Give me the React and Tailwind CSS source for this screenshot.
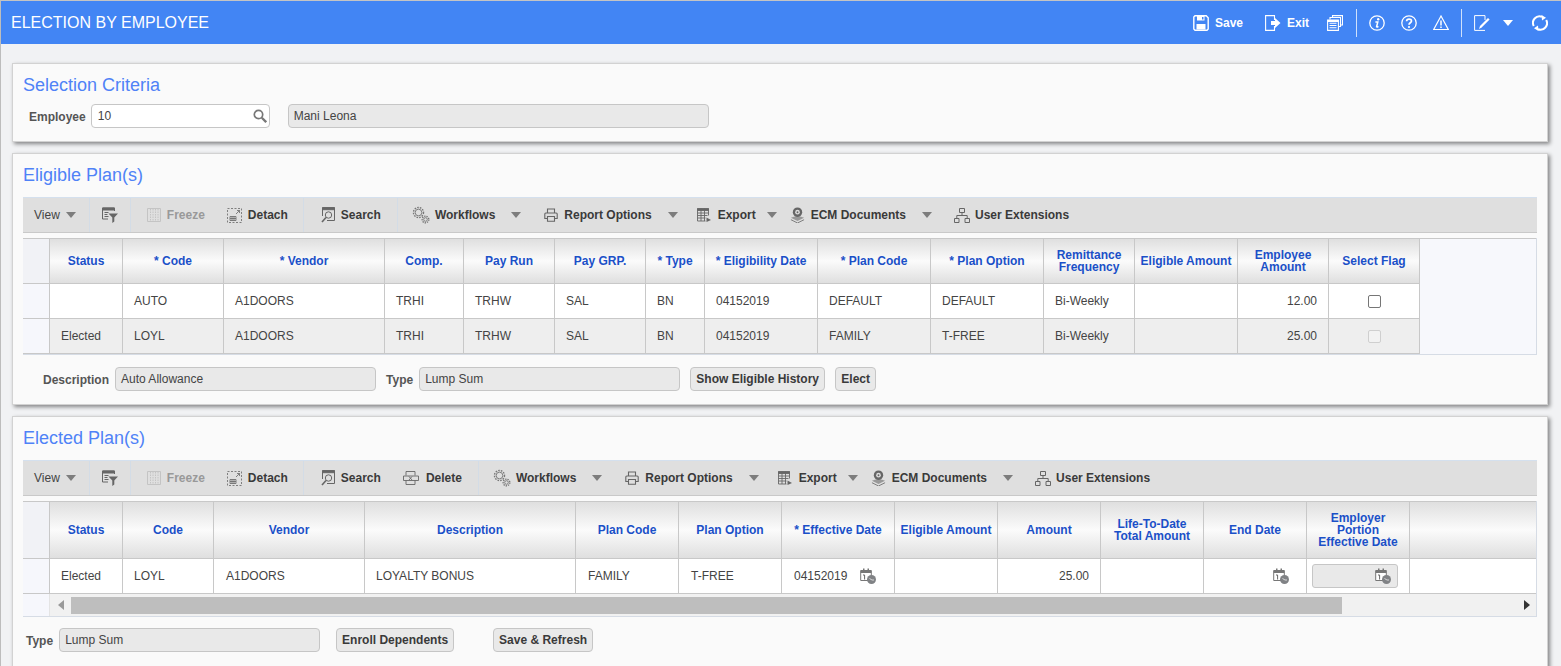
const Caret = ({ className = 'ml-[16px]' }) => (
  <svg viewBox="0 0 10 6" className={`w-[10px] h-[6px] shrink-0 fill-[#7d7d7d] ${className}`}><path d="M0 0h10L5 6z" /></svg>
);

const IconSave = () => (
  <svg viewBox="0 0 16 16" className="w-4 h-4 fill-none stroke-white stroke-[1.4]">
    <path d="M.8 2 2 .8h11.200l2 2v11.200l-1.200 1.200H2L.8 14z" />
    <path d="M4 1h7.500v4.500H4z" fill="#fff" stroke="none" />
    <path d="M3.500 9h9v5.500h-9z" fill="#fff" stroke="none" />
    <path d="M9 2h1.500v2.500H9z" fill="#4285f4" stroke="none" />
  </svg>
);
const IconExit = () => (
  <svg viewBox="0 0 16 16" className="w-4 h-4 fill-none stroke-white stroke-[1.1]">
    <path d="M9.500 5V.6H.6v14.800h8.900V11" />
    <path d="M6 6h4V3l5.500 5-5.500 5v-3H6z" fill="#fff" stroke="none" />
  </svg>
);
const IconStack = () => (
  <svg viewBox="0 0 16 16" className="w-4 h-4 fill-none stroke-white stroke-[1.1]">
    <path d="M5.500 2.500V.6h10v9.400H13.500" />
    <path d="M3 4.500v-2h10.500v9H11.500" />
    <path d="M.6 5h10.800v10.400H.6z" />
    <path d="M2.500 8.300h7M2.500 10.500h7M2.500 12.800h7" />
    <path d="M.6 5h10.800v2H.6z" fill="#fff" stroke="none" />
  </svg>
);
const IconInfo = () => (
  <svg viewBox="0 0 16 16" className="w-4 h-4 fill-none stroke-white stroke-[1.3]">
    <circle cx="8" cy="8" r="7.200" />
    <circle cx="9.200" cy="4.200" r="1.200" fill="#fff" stroke="none" />
    <path d="M6.400 7h2.400L7.600 11.600c-.1.600.4.800 1.800-.3" strokeWidth="1.500" />
  </svg>
);
const IconHelp = () => (
  <svg viewBox="0 0 16 16" className="w-4 h-4 fill-none stroke-white stroke-[1.3]">
    <circle cx="8" cy="8" r="7.200" />
    <path d="M5.600 6.200C5.700 3.400 10.500 3.300 10.500 6c0 1.800-2.500 1.800-2.500 3.800" strokeWidth="1.700" />
    <circle cx="8" cy="12" r="1.100" fill="#fff" stroke="none" />
  </svg>
);
const IconWarn = () => (
  <svg viewBox="0 0 16 16" className="w-4 h-4 fill-none stroke-white stroke-[1.2]">
    <path d="M8 1 .7 14.500h14.600z" />
    <path d="M8 5.500v5" strokeWidth="1.500" />
    <path d="M8 11.500v1.500" strokeWidth="1.500" />
  </svg>
);
const IconNote = () => (
  <svg viewBox="0 0 16 16" className="w-4 h-4 fill-none stroke-white stroke-1">
    <path d="M11 5V.6H.6v14.800H11" />
    <path d="m5 14 1-3 8-8 1.600 1.600-8 8z" fill="#fff" stroke="none" />
  </svg>
);
const IconRefresh = () => (
  <svg viewBox="0 0 16 16" className="w-4 h-4 fill-none stroke-white stroke-2">
    <path d="M1.800 11A6.600 6.600 0 0 1 10 1.700" />
    <path d="M14.200 5A6.600 6.600 0 0 1 6 14.300" />
    <path d="M9.500 0 14 2.800 10 5.500zM6.500 16 2 13.200 6 10.500z" fill="#fff" stroke="none" />
  </svg>
);

const IconFilter = () => (
  <svg viewBox="0 0 16 16" className="w-4 h-4 ml-[12px] shrink-0 fill-none stroke-[#666] stroke-1">
    <path d="M.5 1h12v3" />
    <path d="M.5 1v11H6" />
    <path d="M.5 1h12v2H.5z" fill="#666" />
    <path d="M2.500 5.500h4M2.500 7.500h3M2.500 9.500h4" />
    <path d="M6.500 6.500H16l-3.700 4v4l-2 1.500v-5.500z" fill="#666" stroke="none" />
  </svg>
);
const IconFreeze = () => (
  <svg viewBox="0 0 14 14" className="w-[14px] h-[14px] ml-[16px] shrink-0 fill-none stroke-[#c4c4c4] stroke-1">
    <path d="M.5.500h13v13H.5z" />
    <path d="M3.500 1v12M6 1v12M8.500 1v12M11 1v12" strokeDasharray="1.500 1" />
  </svg>
);
const IconDetach = () => (
  <svg viewBox="0 0 15 15" className="w-[15px] h-[15px] ml-[22px] shrink-0 fill-none stroke-[#666] stroke-[0.8]">
    <path d="M.5.500h14v14H.5z" strokeDasharray="2 1.500" />
    <path d="M3 8.500h6v4H3zM3 10.500h6M5 8.500v4M7 8.500v4" />
    <path d="m9 6 3.500-3.500M10 2.500h2.500V5" />
  </svg>
);
const IconSearch = () => (
  <svg viewBox="0 0 14 16" className="w-[14px] h-4 ml-[17px] shrink-0 fill-none stroke-[#666] stroke-1">
    <path d="M1.500.700h12v12.800H6" />
    <path d="M1.500.700V9" />
    <path d="M1.500.700h12v2h-12z" fill="#666" />
    <circle cx="7.500" cy="8" r="3.200" />
    <path d="m5 10.500-4 4.500" strokeWidth="1.600" />
  </svg>
);
const IconDelete = () => (
  <svg viewBox="0 0 16 14" className="w-4 h-[14px] ml-[22px] shrink-0 fill-none stroke-[#666] stroke-[0.9]">
    <path d="M3 .5h9v4M3 .5v4M3 9.500v4h9v-4" />
    <path d="M.5 5h15v4.500H.5z" />
    <path d="m6 5.500 3 3.500M9 5.500 6 9" />
  </svg>
);
const IconGears = () => (
  <svg viewBox="0 0 18 18" className="w-[18px] h-[18px] ml-[14px] shrink-0 fill-none stroke-[#777]">
    <circle cx="6.500" cy="6.500" r="5" strokeWidth="1.400" strokeDasharray="1.600 1.100" />
    <circle cx="6.500" cy="6.500" r="3.300" strokeWidth="0.900" />
    <circle cx="13.500" cy="13.500" r="3.300" strokeWidth="1.400" strokeDasharray="1.300 1" />
    <circle cx="13.500" cy="13.500" r="1.800" strokeWidth="0.900" />
  </svg>
);
const IconPrinter = () => (
  <svg viewBox="0 0 14 14" className="w-[14px] h-[14px] ml-[23px] shrink-0 fill-none stroke-[#666] stroke-[1.100]">
    <path d="M3.500 5V1h7v4" />
    <path d="M3 10.500H.8V6q0-1 1-1h10.400q1 0 1 1v4.500H11" fill="#ddd" />
    <path d="M3.500 8.500h7v4.800h-7z" />
  </svg>
);
const IconExport = () => (
  <svg viewBox="0 0 14 14" className="w-[14px] h-[14px] ml-[19px] shrink-0 fill-none stroke-[#666] stroke-[0.9]">
    <path d="M.5.500h11v2H.5z" fill="#666" />
    <path d="M.5.500v12.500h8M11.500.500v7M.5 5h11M.5 7.500h10M.5 10h8M4 .5V13M7.500.5V13" />
    <path d="M9.500 9.500 14 12l-4.500 2z" fill="#666" stroke="none" />
  </svg>
);
const IconEcm = () => (
  <svg viewBox="0 0 16 17" className="w-[15px] h-4 ml-[13px] shrink-0">
    <path d="M1 11.500 8 9l7 2.500L8 15z" fill="#999" />
    <path d="M1 13.500 8 17l7-3.500" fill="none" stroke="#777" strokeWidth="1" />
    <circle cx="8" cy="5.500" r="5" fill="#666" />
    <circle cx="8" cy="5.500" r="2.500" fill="#ddd" />
    <circle cx="8" cy="5.500" r="1" fill="#666" />
  </svg>
);
const IconTree = () => (
  <svg viewBox="0 0 16 15" className="w-4 h-[15px] ml-[22px] shrink-0 fill-none stroke-[#666] stroke-1">
    <path d="M5.500.5h5v4h-5zM.5 10.500h4.500v4H.5zM11 10.500h4.500v4H11z" />
    <path d="M8 4.500v3M2.800 10.500v-3h10.400v3" />
  </svg>
);
const IconSearchInput = () => (
  <svg viewBox="0 0 14 14" className="w-[14px] h-[14px] fill-none stroke-[#777]">
    <circle cx="5.500" cy="5.500" r="4.200" strokeWidth="1.700" />
    <path d="m8.800 8.800 4.400 4.400" strokeWidth="2.300" />
  </svg>
);
const IconDateTime = ({ className = '' }) => (
  <svg viewBox="0 0 16 16" className={`w-4 h-4 shrink-0 ${className}`}>
    <path d="M.7 2.500h10.600v10H.7z" fill="#fff" stroke="#777" strokeWidth="1" />
    <path d="M.7 2.500h10.600v2.500H.7z" fill="#777" />
    <path d="M3 .5h1.500v3H3zM7.500.5H9v3H7.500z" fill="#777" />
    <path d="M3 7h1.600v4.500" fill="none" stroke="#666" strokeWidth="1" />
    <circle cx="11.500" cy="11.500" r="4.500" fill="#808285" />
    <path d="m9.500 10.500 2.500 1.500h2" fill="none" stroke="#eee" strokeWidth="0.800" />
  </svg>
);

const ToolItem = ({ children, label, gap = 'ml-[6px]', disabled }) => (
  <>
    {children}
    <span className={`${gap} font-bold whitespace-nowrap shrink-0 ${disabled ? 'text-[#999]' : 'text-[#3a3a3a]'}`}>{label}</span>
  </>
);

const Sep = ({ className }) => <span className={`w-px h-full bg-[#d3dce6] shrink-0 ${className}`} />;

function Toolbar({ withDelete, className = '' }) {
  return (
    <div className={`flex items-center bg-[#dfdfdf] border-t border-t-[#d4e0ee] border-b border-b-[#c9c9c9] text-xs pl-[11px] ${className}`}>
      <span className="text-[#444] shrink-0">View</span>
      <Caret className="ml-[6px]" />
      <Sep className="ml-[13px]" />
      <IconFilter />
      <Sep className="ml-[12px]" />
      <ToolItem label="Freeze" disabled><IconFreeze /></ToolItem>
      <ToolItem label="Detach"><IconDetach /></ToolItem>
      <Sep className="ml-[15px]" />
      <ToolItem label="Search"><IconSearch /></ToolItem>
      {withDelete && <ToolItem label="Delete" gap="ml-[7px]"><IconDelete /></ToolItem>}
      <Sep className="ml-[16px]" />
      <ToolItem label="Workflows" gap="ml-[5px]"><IconGears /></ToolItem>
      <Caret />
      <ToolItem label="Report Options"><IconPrinter /></ToolItem>
      <Caret />
      <ToolItem label="Export" gap="ml-[7px]"><IconExport /></ToolItem>
      <Caret className="ml-[11px]" />
      <ToolItem label="ECM Documents"><IconEcm /></ToolItem>
      <Caret />
      <ToolItem label="User Extensions" gap="ml-[5px]"><IconTree /></ToolItem>
    </div>
  );
}

const ReadOnly = ({ value, className = '' }) => (
  <div className={`h-6 flex items-center px-[5px] bg-[#e9e9e9] border border-[#c6c6c6] rounded text-[#444] text-xs shrink-0 ${className}`}>{value}</div>
);
const Label = ({ children, className = '' }) => (
  <span className={`font-bold text-xs text-[#555] shrink-0 pt-[2px] ${className}`}>{children}</span>
);
const Btn = ({ children, className = '' }) => (
  <button className={`h-6 bg-[#e9e9e9] border border-[#c6c6c6] rounded text-xs font-bold text-[#3a3a3a] shrink-0 ${className}`}>{children}</button>
);
const Title = ({ children }) => (
  <h2 className="h-6 flex items-center text-lg font-normal text-[#4f82f7]">{children}</h2>
);
const Card = ({ children, className = '' }) => (
  <section className={`bg-[#fafafa] border border-[#d2d2d2] pt-[9px] px-[10px] shadow-[2px_2px_4px_rgba(0,0,0,0.45)] ${className}`}>{children}</section>
);

const eligibleGrid = 'grid grid-cols-[27px_73px_101px_161px_79px_91px_91px_59px_113px_113px_113px_91px_103px_91px_91px]';
const electedGrid = 'grid grid-cols-[27px_73px_91px_151px_211px_103px_103px_113px_103px_103px_103px_103px_103px_128px]';

const HeadCell = ({ children }) => (
  <div className="flex items-center justify-center text-center leading-3 px-1 font-bold text-xs text-[#1b50c8] border-r border-r-[#c8c8c8] bg-gradient-to-b from-[#dfdfdf] via-[#fbfbfb] to-[#dfdfdf]">
    {children}
  </div>
);
const Cell = ({ children, right, center, className = 'px-[11px]' }) => (
  <div className={`flex items-center text-xs text-[#444] border-r border-r-[#c8c8c8] border-b border-b-[#c8c8c8] whitespace-nowrap ${className} ${right ? 'justify-end' : center ? 'justify-center' : ''}`}>
    {children}
  </div>
);
const RowHead = () => <div className="bg-[#f6f7fc] border-r border-r-[#c8c8c8] border-b border-b-[#c8c8c8]" />;

const eligibleHead = ['Status', '* Code', '* Vendor', 'Comp.', 'Pay Run', 'Pay GRP.', '* Type', '* Eligibility Date', '* Plan Code', '* Plan Option', 'Remittance Frequency', 'Eligible Amount', 'Employee Amount', 'Select Flag'];
const eligibleRows = [
  ['', 'AUTO', 'A1DOORS', 'TRHI', 'TRHW', 'SAL', 'BN', '04152019', 'DEFAULT', 'DEFAULT', 'Bi-Weekly', '', '12.00'],
  ['Elected', 'LOYL', 'A1DOORS', 'TRHI', 'TRHW', 'SAL', 'BN', '04152019', 'FAMILY', 'T-FREE', 'Bi-Weekly', '', '25.00'],
];
const electedHead = ['Status', 'Code', 'Vendor', 'Description', 'Plan Code', 'Plan Option', '* Effective Date', 'Eligible Amount', 'Amount', 'Life-To-Date Total Amount', 'End Date', 'Employer Portion Effective Date', ''];

export default function App() {
  return (
    <div className="h-[666px] overflow-hidden bg-[#f1f2f4] border-l border-l-[#bdbdbd] border-t border-t-[#c4c4c4] font-['Liberation_Sans',Arial,sans-serif]">
      <header className="h-[43px] flex items-center bg-[#4285f4] text-white pl-[10px] pr-[13px]">
        <h1 className="text-base font-normal">ELECTION BY EMPLOYEE</h1>
        <div className="ml-auto flex items-center text-xs font-bold">
          <IconSave />
          <span className="ml-[6px]">Save</span>
          <span className="ml-[22px]"><IconExit /></span>
          <span className="ml-[6px]">Exit</span>
          <span className="ml-[18px]"><IconStack /></span>
          <span className="ml-[13px] w-px h-7 bg-[#cfe0fb]" />
          <span className="ml-[12px]"><IconInfo /></span>
          <span className="ml-4"><IconHelp /></span>
          <span className="ml-4"><IconWarn /></span>
          <span className="ml-[12px] w-px h-7 bg-[#cfe0fb]" />
          <span className="ml-[12px]"><IconNote /></span>
          <svg viewBox="0 0 10 6" className="ml-[13px] w-[10px] h-[6px] fill-white"><path d="M0 0h10L5 6z" /></svg>
          <span className="ml-[19px]"><IconRefresh /></span>
        </div>
      </header>

      <main className="flex flex-col pl-[11px] w-[1547px]">
        <Card className="mt-[19px] pb-[13px]">
          <Title>Selection Criteria</Title>
          <div className="flex items-center mt-[7px] pl-[6px]">
            <Label>Employee</Label>
            <div className="ml-[5px] w-[179px] h-6 flex items-center justify-between pl-[6px] pr-[2px] bg-white border border-[#c6c6c6] rounded text-xs text-[#444]">
              <span>10</span>
              <IconSearchInput />
            </div>
            <ReadOnly value="Mani Leona" className="ml-[18px] w-[421px]" />
          </div>
        </Card>

        <Card className="mt-[11px] pb-[13px]">
          <Title>Eligible Plan(s)</Title>
          <Toolbar className="mt-[10px] h-[36px]" />
          <div className="mt-[5px] bg-[#f7f8fc] border-b border-r border-[#d6dce5]">
            <div className={`${eligibleGrid} h-[46px] border-t border-t-[#c8c8c8]`}>
              <div className="bg-[#f1f2f6] border-r border-b border-[#c8c8c8]" />
              {eligibleHead.map((h) => <div key={h} className="grid border-b border-b-[#c8c8c8]"><HeadCell>{h}</HeadCell></div>)}
            </div>
            {eligibleRows.map((row, i) => (
              <div key={i} className={`${eligibleGrid} h-[35px]`}>
                <RowHead />
                {row.map((v, j) => (
                  <div key={j} className={`grid ${i ? 'bg-[#eeeeee]' : 'bg-white'}`}>
                    <Cell right={j === 12}>{v}</Cell>
                  </div>
                ))}
                <div className={`grid ${i ? 'bg-[#eeeeee]' : 'bg-white'}`}>
                  <Cell center>
                    <input type="checkbox" disabled={i === 1} className={`appearance-none w-[13px] h-[13px] rounded-[2px] border ${i ? 'border-[#cfcfcf] bg-[#f2f2f2]' : 'border-[#767676] bg-white'}`} />
                  </Cell>
                </div>
              </div>
            ))}
          </div>
          <div className="flex items-center mt-3 pl-5">
            <Label>Description</Label>
            <ReadOnly value="Auto Allowance" className="ml-[6px] w-[261px]" />
            <Label className="ml-[10px]">Type</Label>
            <ReadOnly value="Lump Sum" className="ml-[6px] w-[261px]" />
            <Btn className="ml-[10px] w-[135px]">Show Eligible History</Btn>
            <Btn className="ml-[10px] w-[41px]">Elect</Btn>
          </div>
        </Card>

        <Card className="mt-[11px] h-[260px] shrink-0">
          <Title>Elected Plan(s)</Title>
          <Toolbar withDelete className="mt-[10px] h-[36px]" />
          <div className="mt-[5px] bg-[#f7f8fc] border-b border-r border-[#d6dce5] overflow-hidden">
            <div className={`${electedGrid} h-[58px] border-t border-t-[#c8c8c8]`}>
              <div className="bg-[#f1f2f6] border-r border-b border-[#c8c8c8]" />
              {electedHead.map((h, i) => <div key={i} className="grid border-b border-b-[#c8c8c8]"><HeadCell>{h}</HeadCell></div>)}
            </div>
            <div className={`${electedGrid} h-[35px] bg-white`}>
              <RowHead />
              <Cell>Elected</Cell>
              <Cell>LOYL</Cell>
              <Cell className="px-[12px]">A1DOORS</Cell>
              <Cell>LOYALTY BONUS</Cell>
              <Cell className="px-[12px]">FAMILY</Cell>
              <Cell className="px-[12px]">T-FREE</Cell>
              <Cell className="px-[12px]">04152019<IconDateTime className="ml-[13px]" /></Cell>
              <Cell />
              <Cell right>25.00</Cell>
              <Cell />
              <Cell right className="pr-[17px]"><IconDateTime /></Cell>
              <div className="flex items-center pl-[5px] border-r border-b border-[#c8c8c8]">
                <div className="w-[86px] h-6 flex items-center justify-end pr-[6px] bg-[#e9e9e9] border border-[#c6c6c6] rounded-[3px]">
                  <IconDateTime />
                </div>
              </div>
              <Cell />
            </div>
            <div className="h-[22px] flex items-center bg-[#f1f1f1]">
              <div className="w-[27px] self-stretch bg-[#f6f7fc] border-r border-r-[#e4e4e4]" />
              <svg viewBox="0 0 6 10" className="ml-2 w-[6px] h-[10px] fill-[#999]"><path d="M6 0v10L0 5z" /></svg>
              <div className="ml-[7px] w-[1271px] h-[17px] bg-[#bebebe]" />
              <svg viewBox="0 0 6 10" className="ml-[182px] w-[6px] h-[10px] fill-[#333]"><path d="M0 0v10l6-5z" /></svg>
            </div>
          </div>
          <div className="flex items-center mt-[11px] pl-[3px]">
            <Label>Type</Label>
            <ReadOnly value="Lump Sum" className="ml-[6px] w-[261px]" />
            <Btn className="ml-4 w-[118px]">Enroll Dependents</Btn>
            <Btn className="ml-[39px] w-[100px]">Save &amp; Refresh</Btn>
          </div>
        </Card>
      </main>
    </div>
  );
}
